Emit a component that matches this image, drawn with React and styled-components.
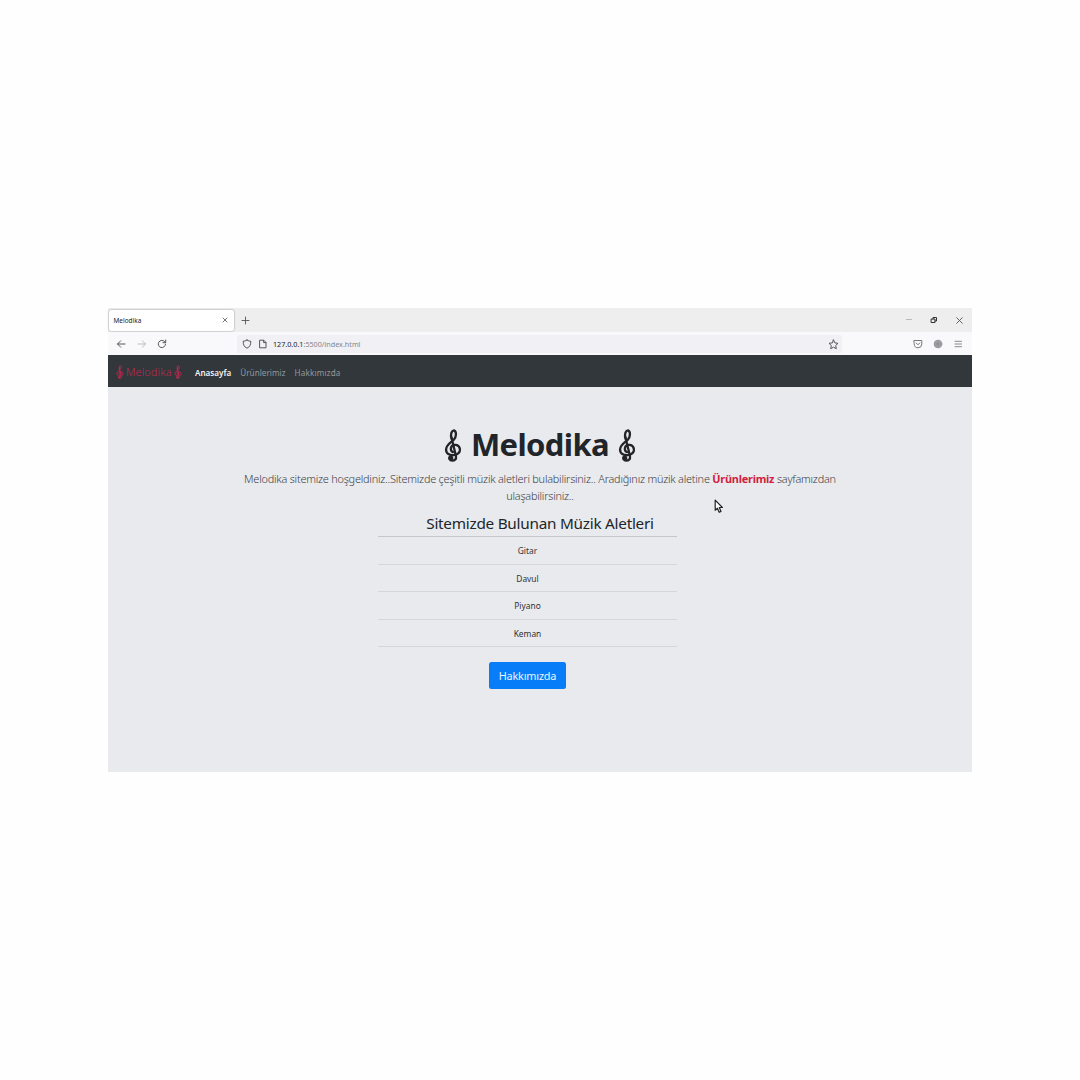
import React from 'react';
import styled, { createGlobalStyle } from 'styled-components';

const Global = createGlobalStyle`
  *, *::before, *::after { box-sizing: border-box; }
  html, body { margin: 0; padding: 0; background: #fefefe; }
  body { font-family: "Noto Sans", "Open Sans", sans-serif; color: #212529; }
`;

const Stage = styled.main`
  display: flex;
  width: 1080px;
  height: 1080px;
  padding: 308px 108px;
  overflow: hidden;
`;

const Window = styled.section`
  position: relative;
  display: flex;
  flex-direction: column;
  width: 864px;
  height: 464px;
  background: #e8eaee;
`;

const TabBar = styled.div`
  display: flex;
  align-items: center;
  height: 24px;
  background: #eeeeee;
`;

const Tab = styled.div`
  display: flex;
  align-items: center;
  justify-content: space-between;
  width: 125px;
  height: 21px;
  margin-left: 1px;
  padding: 0 6px 0 4.5px;
  background: #fff;
  border-radius: 2px;
  box-shadow: 0 0 2px #85858c;
  font-size: 6.4px;
  letter-spacing: 0.05px;
  color: #222;
`;

const NewTab = styled.div`
  display: flex;
  margin-left: 7px;
`;

const Controls = styled.div`
  display: flex;
  align-items: center;
  gap: 17px;
  margin-left: auto;
  padding-right: 8px;
`;

const Toolbar = styled.div`
  display: flex;
  align-items: center;
  height: 23px;
  padding: 1px 9px 0 8px;
  background: #f9f9fb;
`;

const NavButtons = styled.div`
  display: flex;
  gap: 10.5px;
  width: 121px;
`;

const Address = styled.div`
  display: flex;
  align-items: center;
  width: 605px;
  height: 18px;
  padding: 0 3px 0 5px;
  border-radius: 2px;
  background: #f1f1f5;
`;

const Url = styled.span`
  margin-left: 5px;
  margin-right: auto;
  font-size: 7.2px;
  color: #85858a;
  white-space: nowrap;
  b { font-weight: 400; color: #222; }
`;

const Tools = styled.div`
  display: flex;
  gap: 10px;
  margin-left: auto;
`;

const Icon = styled.svg`
  display: block;
  flex: none;
  width: ${(p) => p.$w || 10}px;
  height: ${(p) => p.$h || p.$w || 10}px;
  margin-left: ${(p) => p.$ml || 0}px;
  fill: none;
  stroke: ${(p) => p.$c || '#55555a'};
  stroke-width: ${(p) => p.$sw || 1};
  stroke-linecap: round;
  stroke-linejoin: round;
`;

const Navbar = styled.nav`
  display: flex;
  align-items: center;
  height: 32px;
  padding: 2px 8px 0;
  background: #31373b;
`;

const Brand = styled.a`
  display: flex;
  align-items: center;
  gap: 2px;
  width: 79px;
  color: #c22850;
  font-size: 10.8px;
  line-height: 14px;
  margin-top: -1px;
  font-weight: 300;
  letter-spacing: 0.15px;
`;

const NavLink = styled.a`
  margin-right: 9px;
  font-size: 8.1px;
  letter-spacing: ${(p) => p.$track || 0}px;
  font-weight: ${(p) => (p.$active ? 600 : 400)};
  color: ${(p) => (p.$active ? '#f3f3f3' : '#96999c')};
`;

const Hero = styled.header`
  display: flex;
  flex-direction: column;
  align-items: center;
  padding-top: 35px;
`;

const Title = styled.h1`
  display: flex;
  align-items: center;
  gap: 9px;
  height: 44px;
  margin: 0;
  font-size: 31px;
  line-height: 44px;
  font-weight: 700;
  letter-spacing: -0.6px;
  svg { position: relative; top: 1.5px; }
`;

const Lead = styled.p`
  margin: 4px 0 0;
  font-size: 10.9px;
  line-height: 17px;
  font-weight: 300;
  text-align: center;
  white-space: nowrap;
  color: #3d4144;
  letter-spacing: -0.22px;
  b { color: #d0213f; font-weight: 700; }
`;

const Subtitle = styled.h2`
  margin: 9px 0 0;
  font-size: 15.3px;
  line-height: 20px;
  font-weight: 400;
  letter-spacing: -0.25px;
`;

const Catalog = styled.div`
  display: flex;
  flex-direction: column;
  align-items: center;
  width: 299px;
  margin: 3px 0 0 270px;
`;

const List = styled.ul`
  width: 100%;
  margin: 0;
  padding: 0;
  list-style: none;
  border-top: 1px solid #c5c8cb;
`;

const Item = styled.li`
  height: 27.5px;
  border-bottom: 1px solid #d4d6d9;
  font-size: 8.4px;
  line-height: 27.4px;
  text-align: center;
  color: #303437;
`;

const Button = styled.button`
  width: 77px;
  height: 27px;
  margin-top: 15px;
  padding: 0;
  border: 0;
  border-radius: 2.5px;
  background: #077df8;
  color: #e9f3ff;
  font: 400 10.9px/27px "Noto Sans", sans-serif;
  letter-spacing: -0.2px;
`;

const Pointer = styled.div`
  position: absolute;
  left: 606px;
  top: 191px;
`;

function Clef({ w, h, color, weight }) {
  return (
    <Icon $w={w} $h={h} $c={color} $sw={weight} viewBox="0 0 50 100">
      <path d="M20 24L34 82Q36 96 22 96Q17 96 16 91" />
      <path d="M21 30C16 15 21 5 28 4C36 7 36 24 27 33C15 43 4 50 4 62C4 75 15 80 27 79C40 78 47 70 46 61C44 46 24 44 19 56C17 64 20 68 25 70" />
      <circle cx="18" cy="88" r="4.5" fill={color} />
    </Icon>
  );
}

const instruments = ['Gitar', 'Davul', 'Piyano', 'Keman'];

export default function App() {
  return (
    <Stage>
      <Global />
      <Window>
        <TabBar>
          <Tab>
            <span>Melodika</span>
            <Icon $w={6} $sw={0.8} viewBox="0 0 6 6"><path d="M1 1L5 5M5 1L1 5" /></Icon>
          </Tab>
          <NewTab>
            <Icon $w={9} $sw={0.9} viewBox="0 0 9 9"><path d="M4.5 1V8M1 4.5H8" /></Icon>
          </NewTab>
          <Controls>
            <Icon $w={8} $c="#aaa" $sw={0.8} viewBox="0 0 8 8"><path d="M1.5 3.5H6.5" /></Icon>
            <Icon $w={8} $c="#333" $sw={1} viewBox="0 0 8 8"><path d="M1.5 3H5V6.5H1.5ZM3 3V1.5H6.5V5H5" /></Icon>
            <Icon $w={9} $c="#555" $sw={0.9} viewBox="0 0 9 9"><path d="M1.7 1.7L7.3 7.3M7.3 1.7L1.7 7.3" /></Icon>
          </Controls>
        </TabBar>
        <Toolbar>
          <NavButtons>
            <Icon viewBox="0 0 10 10"><path d="M9 5H1.5M4.7 1.8L1.5 5L4.7 8.2" /></Icon>
            <Icon $c="#bdbdc1" viewBox="0 0 10 10"><path d="M1 5H8.5M5.3 1.8L8.5 5L5.3 8.2" /></Icon>
            <Icon viewBox="0 0 10 10"><path d="M8.5 5.2A3.6 3.6 0 1 1 7.4 2.4L8.6 3.5M8.7 1V3.7H6" /></Icon>
          </NavButtons>
          <Address>
            <Icon viewBox="0 0 10 10"><path d="M5 1C6.5 2 7.5 2.2 8.8 2.2C8.8 6 7.8 8 5 9.2C2.2 8 1.2 6 1.2 2.2C2.5 2.2 3.5 2 5 1Z" /></Icon>
            <Icon $ml={6} viewBox="0 0 10 10"><path d="M2 1.2H5.8L8 3.4V8.8H2ZM5.6 1.4V3.6H7.8" /></Icon>
            <Url><b>127.0.0.1</b>:5500/index.html</Url>
            <Icon $w={11} viewBox="0 0 11 11">
              <path d="M5.5 1L6.9 3.9L10 4.3L7.7 6.5L8.3 9.7L5.5 8.2L2.7 9.7L3.3 6.5L1 4.3L4.1 3.9Z" />
            </Icon>
          </Address>
          <Tools>
            <Icon $c="#77777b" viewBox="0 0 10 10"><path d="M1.2 1.5H8.8V5A3.8 3.8 0 0 1 1.2 5ZM3.2 4L5 5.8L6.8 4" /></Icon>
            <Icon $c="#96969a" viewBox="0 0 10 10"><circle cx="5" cy="5" r="3.8" fill="#a0a0a4" /><path d="M3 5H7M5 3V7" stroke="#8d8d91" /></Icon>
            <Icon $c="#8a8a8e" viewBox="0 0 10 10"><path d="M2 2.3H8.5M2 5H8.5M2 7.7H8.5" /></Icon>
          </Tools>
        </Toolbar>
        <Navbar>
          <Brand>
            <Clef w={8} h={14} color="#c22850" weight={7} />
            <span>Melodika</span>
            <Clef w={8} h={14} color="#c22850" weight={7} />
          </Brand>
          <NavLink $active>Anasayfa</NavLink>
          <NavLink $track={0.05}>Ürünlerimiz</NavLink>
          <NavLink $track={0.17}>Hakkımızda</NavLink>
        </Navbar>
        <Hero>
          <Title>
            <Clef w={18} h={33} color="#212529" weight={7} />
            <span>Melodika</span>
            <Clef w={18} h={33} color="#212529" weight={7} />
          </Title>
          <Lead>
            Melodika sitemize hoşgeldiniz..Sitemizde çeşitli müzik aletleri bulabilirsiniz.. Aradığınız müzik aletine <b>Ürünlerimiz</b> sayfamızdan
            <br />
            ulaşabilirsiniz..
          </Lead>
          <Subtitle>Sitemizde Bulunan Müzik Aletleri</Subtitle>
        </Hero>
        <Catalog>
          <List>
            {instruments.map((name) => <Item key={name}>{name}</Item>)}
          </List>
          <Button>Hakkımızda</Button>
        </Catalog>
        <Pointer>
          <Icon $w={10} $h={15} $c="#222" $sw={1.2} viewBox="0 0 10 15">
            <path fill="#fff" d="M1.2 1.2V11.2L3.4 9.2L5.2 13.3L7 12.5L5.3 8.5H8.4Z" />
          </Icon>
        </Pointer>
      </Window>
    </Stage>
  );
}
